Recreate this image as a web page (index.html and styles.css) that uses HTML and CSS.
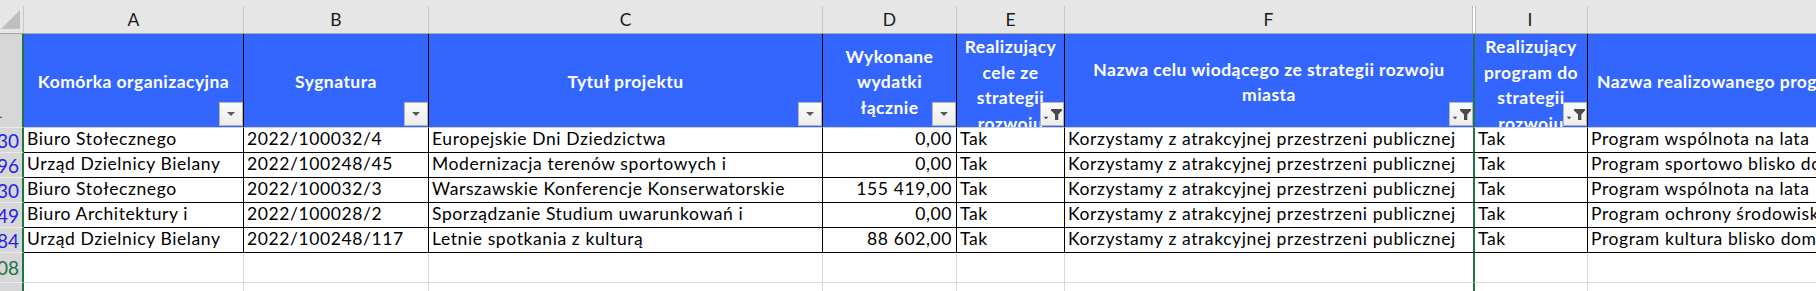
FILE: index.html
```html
<!DOCTYPE html>
<html lang="pl">
<head>
<meta charset="utf-8">
<title>Arkusz</title>
<link rel="stylesheet" href="styles.css">
</head>
<body>
<div class="sheet">
  <div class="grid colhead">
    <div class="corner"><svg width="22" height="27" viewBox="0 0 22 27"><polygon points="1,23 20,23 20,4" fill="#bfbfbf"/></svg></div>
    <div class="ch">A</div>
    <div class="ch">B</div>
    <div class="ch">C</div>
    <div class="ch">D</div>
    <div class="ch">E</div>
    <div class="ch ch-f">F</div>
    <div class="ch ch-i">I</div>
    <div class="ch"></div>
  </div>

  <div class="grid row-head">
    <div class="rl rl-head"><span class="rl-one">1</span></div>
    <div class="h"><span>Komórka organizacyjna</span><span class="fb"><svg width="22" height="22" viewBox="0 0 22 22"><path d="M7 9H15L11 13Z" fill="#595959"/></svg></span></div>
    <div class="h"><span>Sygnatura</span><span class="fb"><svg width="22" height="22" viewBox="0 0 22 22"><path d="M7 9H15L11 13Z" fill="#595959"/></svg></span></div>
    <div class="h"><span>Tytuł projektu</span><span class="fb"><svg width="22" height="22" viewBox="0 0 22 22"><path d="M7 9H15L11 13Z" fill="#595959"/></svg></span></div>
    <div class="h"><span>Wykonane<br>wydatki<br>łącznie</span><span class="fb"><svg width="22" height="22" viewBox="0 0 22 22"><path d="M7 9H15L11 13Z" fill="#595959"/></svg></span></div>
    <div class="h h-top"><span>Realizujący<br>cele ze<br>strategii<br>rozwoju<br>miasta</span><span class="fb"><svg width="22" height="22" viewBox="0 0 22 22"><path d="M10 6H21V7.5L17.3 11.5V17H14V11.5L10 7.5Z" fill="#4a4a4a"/><path d="M2.7 13.8H7.3L5 16.2Z" fill="#4a4a4a"/></svg></span></div>
    <div class="h h-f"><span>Nazwa celu wiodącego ze strategii rozwoju<br>miasta</span><span class="fb"><svg width="22" height="22" viewBox="0 0 22 22"><path d="M10 6H21V7.5L17.3 11.5V17H14V11.5L10 7.5Z" fill="#4a4a4a"/><path d="M2.7 13.8H7.3L5 16.2Z" fill="#4a4a4a"/></svg></span></div>
    <div class="h h-top h-i"><span>Realizujący<br>program do<br>strategii<br>rozwoju<br>miasta</span><span class="fb"><svg width="22" height="22" viewBox="0 0 22 22"><path d="M10 6H21V7.5L17.3 11.5V17H14V11.5L10 7.5Z" fill="#4a4a4a"/><path d="M2.7 13.8H7.3L5 16.2Z" fill="#4a4a4a"/></svg></span></div>
    <div class="h h-left"><span>Nazwa realizowanego programu</span></div>
  </div>

  <div class="grid row-data">
    <div class="rl rl-blue">30</div>
    <div class="c">Biuro Stołecznego</div>
    <div class="c">2022/100032/4</div>
    <div class="c">Europejskie Dni Dziedzictwa</div>
    <div class="c num">0,00</div>
    <div class="c">Tak</div>
    <div class="c c-f">Korzystamy z atrakcyjnej przestrzeni publicznej</div>
    <div class="c c-i">Tak</div>
    <div class="c">Program wspólnota na lata</div>
  </div>
  <div class="grid row-data">
    <div class="rl rl-blue">96</div>
    <div class="c">Urząd Dzielnicy Bielany</div>
    <div class="c">2022/100248/45</div>
    <div class="c">Modernizacja terenów sportowych i</div>
    <div class="c num">0,00</div>
    <div class="c">Tak</div>
    <div class="c c-f">Korzystamy z atrakcyjnej przestrzeni publicznej</div>
    <div class="c c-i">Tak</div>
    <div class="c">Program sportowo blisko domu</div>
  </div>
  <div class="grid row-data">
    <div class="rl rl-blue">30</div>
    <div class="c">Biuro Stołecznego</div>
    <div class="c">2022/100032/3</div>
    <div class="c">Warszawskie Konferencje Konserwatorskie</div>
    <div class="c num">155 419,00</div>
    <div class="c">Tak</div>
    <div class="c c-f">Korzystamy z atrakcyjnej przestrzeni publicznej</div>
    <div class="c c-i">Tak</div>
    <div class="c">Program wspólnota na lata</div>
  </div>
  <div class="grid row-data">
    <div class="rl rl-blue">49</div>
    <div class="c">Biuro Architektury i</div>
    <div class="c">2022/100028/2</div>
    <div class="c">Sporządzanie Studium uwarunkowań i</div>
    <div class="c num">0,00</div>
    <div class="c">Tak</div>
    <div class="c c-f">Korzystamy z atrakcyjnej przestrzeni publicznej</div>
    <div class="c c-i">Tak</div>
    <div class="c">Program ochrony środowiska</div>
  </div>
  <div class="grid row-data">
    <div class="rl rl-blue">84</div>
    <div class="c">Urząd Dzielnicy Bielany</div>
    <div class="c">2022/100248/117</div>
    <div class="c">Letnie spotkania z kulturą</div>
    <div class="c num">88 602,00</div>
    <div class="c">Tak</div>
    <div class="c c-f">Korzystamy z atrakcyjnej przestrzeni publicznej</div>
    <div class="c c-i">Tak</div>
    <div class="c">Program kultura blisko domu</div>
  </div>

  <div class="grid row-empty">
    <div class="rl rl-green">08</div>
    <div class="e"></div><div class="e"></div><div class="e"></div><div class="e"></div>
    <div class="e"></div><div class="e e-f"></div><div class="e e-i"></div><div class="e"></div>
  </div>
  <div class="grid row-last">
    <div class="rl rl-green rl-next"></div>
    <div class="e"></div><div class="e"></div><div class="e"></div><div class="e"></div>
    <div class="e"></div><div class="e e-f"></div><div class="e e-i"></div><div class="e"></div>
  </div>
</div>
</body>
</html>
```

FILE: styles.css
```css
* { box-sizing: border-box; }
html, body { margin: 0; padding: 0; }
body {
  width: 1816px;
  height: 291px;
  overflow: hidden;
  background: #ffffff;
  font-family: Lato, "Liberation Sans", sans-serif;
}
.sheet { width: 1816px; height: 291px; overflow: hidden; }

.grid {
  display: grid;
  grid-template-columns: 24px 220px 185px 394px 134px 108px 408px 115px 400px;
}

/* column letters */
.colhead {
  height: 34px;
  padding-top: 6px;
  background: #e6e6e6;
  border-bottom: 1px solid #a8a8a8;
}
.colhead > div {
  height: 27px;
  border-right: 1px solid #c8c8c8;
}
.corner { display: flex; align-items: flex-start; }
.ch {
  display: flex;
  align-items: center;
  justify-content: center;
  font-size: 17.5px;
  color: #1a1a1a;
}
.colhead > .ch-f { border-right: 1px solid #bcbcbc; }
.ch-i {
  background: linear-gradient(to right, #ffffff 0 2px, #bcbcbc 2px 3px, #e6e6e6 3px);
}

/* row labels */
.rl {
  background: #d7d7d7;
  border-right: 2px solid #217346;
  border-bottom: 1px solid #ebebeb;
  overflow: hidden;
  display: flex;
  align-items: center;
  justify-content: flex-end;
  padding-right: 3px;
  font-size: 19px;
  white-space: nowrap;
}
.rl-blue { color: #2323e6; }
.rl-green { color: #217346; }
.rl-head {
  align-items: flex-end;
  justify-content: flex-start;
  padding-bottom: 5px;
  color: #217346;
}
.rl-one { margin-left: -8px; }

/* blue header row */
.row-head { height: 94px; }
.h {
  position: relative;
  background: #3366ff;
  border-right: 1px solid #000;
  border-bottom: 1px solid #cfcfcf;
  display: flex;
  flex-direction: column;
  justify-content: center;
  align-items: center;
  text-align: center;
  padding-top: 3px;
  color: #ffffff;
  font-weight: 700;
  font-size: 17.5px;
  letter-spacing: 0.45px;
  line-height: 25.5px;
  white-space: nowrap;
  overflow: hidden;
}
.h-top { justify-content: flex-start; padding-top: 0; }
.h-f { border-right: none; }
.h-i { border-left: 2px solid #217346; }
.h-left { align-items: flex-start; padding-left: 9px; }

.fb {
  position: absolute;
  right: 0;
  bottom: 1px;
  width: 24px;
  height: 24px;
  border: 1px solid #b4b4b4;
  background: linear-gradient(#fbfbfb, #ececec);
  display: flex;
}

/* data rows */
.row-data { height: 25px; }
.c {
  border-right: 1px solid #000;
  border-bottom: 1px solid #000;
  padding: 0 3px;
  font-size: 17.5px;
  letter-spacing: 0.6px;
  line-height: 22px;
  color: #000;
  white-space: nowrap;
  overflow: hidden;
}
.num { text-align: right; padding-right: 4px; }
.c-f { border-right: none; }
.c-i { border-left: 2px solid #217346; }

/* empty rows */
.row-empty { height: 30px; }
.row-last { height: 9px; }
.e {
  border-right: 1px solid #d9d9d9;
  border-bottom: 1px solid #d9d9d9;
}
.row-last .e { border-bottom: none; }
.e-f { border-right: none; }
.e-i { border-left: 2px solid #217346; }
.row-last .rl { border-bottom: none; }
```
